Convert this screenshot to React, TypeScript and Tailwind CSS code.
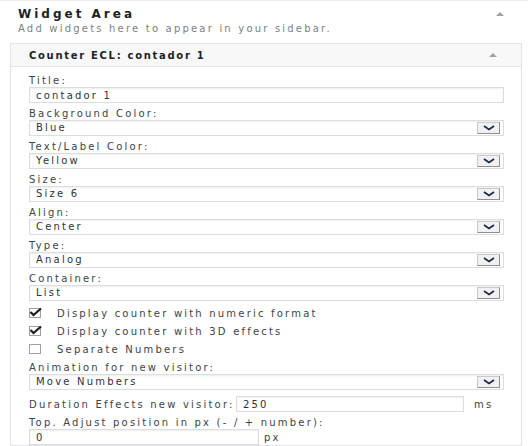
import type { ReactNode } from 'react'

// small grey "collapse" arrow used in both headers
function UpArrow() {
  return (
    <svg width="8" height="4" viewBox="0 0 8 4" className="shrink-0">
      <path d="M0 4L4 0l4 4z" fill="#9ea3a8" />
    </svg>
  )
}

function Chevron() {
  return (
    <svg width="12" height="6" viewBox="0 0 12 6">
      <path d="M1 1l5 3.5L11 1" fill="none" stroke="#1b2547" strokeWidth="1.7" />
    </svg>
  )
}

function Label({ children }: { children: ReactNode }) {
  return <div className="h-[12px] leading-[12px] text-[#3c434a]">{children}</div>
}

function TextInput({ value, className = '' }: { value: string; className?: string }) {
  return (
    <div
      className={`flex h-[16px] items-center border border-[#dddddd] bg-white pl-[6px] text-[#2c3338] shadow-[inset_0_1px_2px_rgba(0,0,0,0.07)] ${className}`}
    >
      {value}
    </div>
  )
}

function Select({ value }: { value: string }) {
  return (
    <div className="flex h-[16px] items-center justify-between border border-[#dddddd] bg-white pl-[6px] pr-[3px] pb-px text-[#2c3338] shadow-[inset_0_1px_2px_rgba(0,0,0,0.07)]">
      <span>{value}</span>
      <span className="flex h-[12px] w-[23px] items-center justify-center border border-[#c9c9c9] border-r-[#8f8f8f] border-b-[#8f8f8f] bg-[#f1f1f1]">
        <Chevron />
      </span>
    </div>
  )
}

function Field({ label, children }: { label: string; children: ReactNode }) {
  return (
    <div className="mt-[5px] first:mt-0">
      <Label>{label}</Label>
      {children}
    </div>
  )
}

function Checkbox({ checked, label }: { checked: boolean; label: string }) {
  return (
    <div className="flex h-[18px] items-center gap-[16px] text-[#3c434a]">
      <span className="relative h-[10px] w-[12px] shrink-0 border border-[#9ca1a6] bg-white">
        {checked && (
          <svg width="14" height="11" viewBox="0 0 14 11" className="absolute -left-[1px] -top-[3px]">
            <path d="M1.5 6l3 3L12 2.5" fill="none" stroke="#1e1e1e" strokeWidth="2.2" />
          </svg>
        )}
      </span>
      <span>{label}</span>
    </div>
  )
}

export default function App() {
  const selects = [
    { label: 'Background Color:', value: 'Blue' },
    { label: 'Text/Label Color:', value: 'Yellow' },
    { label: 'Size:', value: 'Size 6' },
    { label: 'Align:', value: 'Center' },
    { label: 'Type:', value: 'Analog' },
    { label: 'Container:', value: 'List' },
  ]

  return (
    <div className="h-[446px] w-[528px] overflow-hidden border-t border-[#ececec] bg-white font-['DejaVu_Sans',sans-serif] text-[10px] tracking-[2.2px]">
      {/* Sidebar title */}
      <div className="flex items-center justify-between pl-[18px] pr-[24px] pt-[5px]">
        <h2 className="text-[12px] font-bold leading-[16px] tracking-[3px] text-[#1d2327]">Widget Area</h2>
        <UpArrow />
      </div>
      <p className="pl-[18px] leading-[14px] text-[#7b7f84]">Add widgets here to appear in your sidebar.</p>

      {/* Widget */}
      <div className="ml-[10px] mr-[6px] mt-[7px] border border-[#e2e4e7]">
        <div className="flex h-[23px] items-center justify-between border-b border-[#e2e4e7] bg-[#f8f8f8] pl-[18px] pr-[24px]">
          <span className="font-bold tracking-[1.7px] text-[#1d2327]">Counter ECL: contador 1</span>
          <UpArrow />
        </div>

        <div className="pl-[18px] pr-[17px] pt-[8px]">
          <Field label="Title:">
            <TextInput value="contador 1" />
          </Field>
          {selects.map((s) => (
            <Field key={s.label} label={s.label}>
              <Select value={s.value} />
            </Field>
          ))}

          <div className="mt-[3px]">
            <Checkbox checked label="Display counter with numeric format" />
            <Checkbox checked label="Display counter with 3D effects" />
            <Checkbox checked={false} label="Separate Numbers" />
          </div>

          <div className="mt-[4px]">
            <Label>Animation for new visitor:</Label>
            <Select value="Move Numbers" />
          </div>

          <div className="mt-[6px] flex h-[16px] items-center text-[#3c434a]">
            <span className="w-[207px] shrink-0">Duration Effects new visitor:</span>
            <TextInput value="250" className="w-[228px]" />
            <span className="ml-[10px]">ms</span>
          </div>

          <div className="mt-[5px]">
            <Label>Top. Adjust position in px (- / + number):</Label>
            <div className="flex items-center">
              <TextInput value="0" className="w-[230px]" />
              <span className="ml-[5px] text-[#3c434a]">px</span>
            </div>
          </div>
        </div>
      </div>
    </div>
  )
}
